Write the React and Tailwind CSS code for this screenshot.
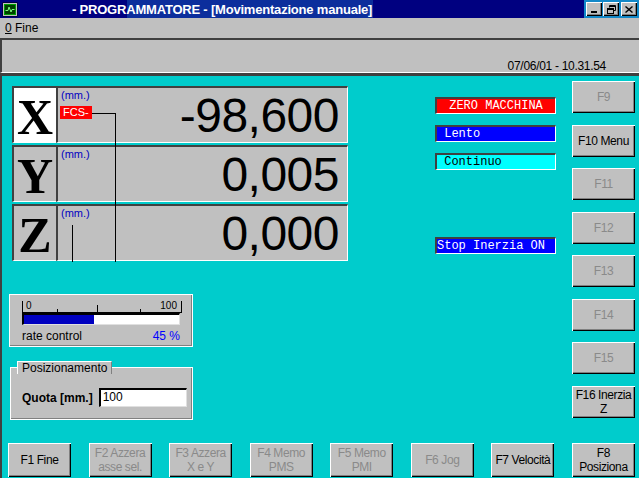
const RAISED =
  "bg-[#c0c0c0] shadow-[inset_1px_1px_0_#ffffff,inset_-1px_-1px_0_#000000,inset_-2px_-2px_0_#808080]";

const SIDE_KEYS = [
  { label: "F9", enabled: false },
  { label: "F10 Menu", enabled: true },
  { label: "F11", enabled: false },
  { label: "F12", enabled: false },
  { label: "F13", enabled: false },
  { label: "F14", enabled: false },
  { label: "F15", enabled: false },
  { label: ["F16 Inerzia", "Z"], enabled: true },
];

const BOTTOM_KEYS = [
  { label: ["F1 Fine"], enabled: true },
  { label: ["F2 Azzera", "asse sel."], enabled: false },
  { label: ["F3 Azzera", "X e Y"], enabled: false },
  { label: ["F4 Memo", "PMS"], enabled: false },
  { label: ["F5 Memo", "PMI"], enabled: false },
  { label: ["F6 Jog"], enabled: false },
  { label: ["F7 Velocità"], enabled: true },
  { label: ["F8", "Posiziona"], enabled: true },
];

const AXES = [
  { axis: "X", value: "-98,600", active: true },
  { axis: "Y", value: "0,005" },
  { axis: "Z", value: "0,000" },
];

function KeyButton({ label, enabled, className }) {
  const lines = Array.isArray(label) ? label : [label];
  return (
    <button
      className={`${RAISED} ${className} flex flex-col items-center justify-center text-[12px] leading-[14px] tracking-[-0.4px] ${
        enabled ? "text-black" : "text-[#8a8a8a]"
      }`}
    >
      {lines.map((l) => (
        <span key={l}>{l}</span>
      ))}
    </button>
  );
}

function AppIcon() {
  return (
    <svg width="16" height="15" viewBox="0 0 16 15">
      <rect x="0.5" y="0.5" width="15" height="14" fill="#000" />
      <rect x="1.5" y="1.5" width="13" height="12" fill="#00a000" stroke="#c0c0c0" />
      <rect x="3" y="3" width="10" height="9" fill="#004000" />
      <path d="M3.5 8.5 L6 8.5 L7 5 L9 10 L10 7.5 L12.5 7.5" stroke="#80ff80" fill="none" />
    </svg>
  );
}

function WinButton({ children }) {
  return (
    <div className="w-[16px] h-[14px] bg-[#c0c0c0] shadow-[inset_1px_1px_0_#ffffff,inset_-1px_-1px_0_#000000,inset_-2px_-2px_0_#808080] flex items-center justify-center">
      {children}
    </div>
  );
}

function AxisRow({ axis, value, active }) {
  return (
    <div className="flex h-[57px] mt-[2px] first:mt-0">
      <div
        className={`w-[44px] flex items-center justify-center border-t-2 border-l-2 border-t-[#404040] border-l-[#404040] border-b border-b-white ${
          active ? "bg-white" : "bg-[#c0c0c0]"
        }`}
      >
        <span className="font-['Liberation_Serif'] font-bold text-[50px] leading-none mt-[3px]">
          {axis}
        </span>
      </div>
      <div className="flex-1 relative bg-[#c0c0c0] border-t-2 border-l-2 border-t-[#404040] border-l-[#404040] border-b border-r border-b-white border-r-white flex items-center justify-end pr-[8px]">
        <div className="absolute left-[3px] top-[1px] text-[11px] leading-[12px] text-[#0000c0]">
          (mm.)
        </div>
        {active && (
          <div className="absolute left-[2px] top-[18px] w-[32px] h-[13px] bg-[#ff0000] text-white text-[11px] leading-[13px] pl-[3px]">
            FCS-
          </div>
        )}
        <span className="text-[48px] leading-none tracking-[-0.5px] mt-[2px]">{value}</span>
      </div>
    </div>
  );
}

function StatusBox({ text, className }) {
  return (
    <div
      className={`h-[17px] border-t-2 border-l-2 border-t-[#404040] border-l-[#404040] border-b border-r border-b-white border-r-white font-['Liberation_Mono'] text-[12px] leading-[14px] whitespace-pre ${className}`}
    >
      {text}
    </div>
  );
}

export default function App() {
  return (
    <div className="w-[639px] h-[478px] overflow-hidden flex flex-col bg-[#c0c0c0] font-['Liberation_Sans',Arial,sans-serif] text-black">
      {/* Title bar */}
      <div className="h-[18px] flex items-center bg-[#000080] relative">
        <div className="ml-[2px]">
          <AppIcon />
        </div>
        <div className="absolute left-[127px] top-0 w-[246px] h-[18px] bg-[#0c2e9c]" />
        <span className="relative ml-[54px] text-white font-bold text-[13px] tracking-[-0.2px] leading-none">
          - PROGRAMMATORE - [Movimentazione manuale]
        </span>
        <div className="ml-auto h-[18px] w-[55px] bg-[#1288c8] flex items-center justify-end gap-[1px] pr-[2px]">
          <WinButton>
            <div className="w-[6px] h-[2px] bg-black mt-[6px]" />
          </WinButton>
          <WinButton>
            <svg width="9" height="9" viewBox="0 0 9 9">
              <path d="M2.5 0.5h6v5h-2M2.5 0.5v2" stroke="#000" fill="none" />
              <path d="M2.5 1.5h6" stroke="#000" />
              <rect x="0.5" y="3.5" width="6" height="5" stroke="#000" fill="none" />
              <path d="M0.5 4.5h6" stroke="#000" />
            </svg>
          </WinButton>
          <div className="ml-[1px]">
            <WinButton>
              <svg width="8" height="7" viewBox="0 0 8 7">
                <path d="M0.5 0.5L7.5 6.5M7.5 0.5L0.5 6.5" stroke="#000" strokeWidth="1.4" />
              </svg>
            </WinButton>
          </div>
        </div>
      </div>

      {/* Menu bar */}
      <div className="h-[20px] flex items-center pl-[5px] text-[12px]">
        <span>
          <span className="underline">0</span> Fine
        </span>
      </div>

      {/* Status panel */}
      <div className="h-[35px] border-t-2 border-l-2 border-t-[#404040] border-l-[#404040] border-b border-b-white flex items-end justify-end pr-[33px] text-[12px] leading-[14px] tracking-[-0.3px]">
        <span className="mb-[-1px]">07/06/01 - 10.31.54</span>
      </div>

      {/* Main teal area */}
      <div className="flex-1 flex flex-col bg-[#00cccc] border-t-[3px] border-t-[#404040] border-l-2 border-l-[#404040]">
        <div className="flex items-start">
          {/* Left column */}
          <div className="w-[346px] mt-[10px]">
            <div className="relative ml-[10px]">
              {AXES.map((a) => (
                <AxisRow key={a.axis} {...a} />
              ))}
              <div className="absolute left-[80px] top-[27px] w-[24px] h-[1px] bg-black" />
              <div className="absolute left-[103px] top-[27px] w-[1px] h-[149px] bg-black" />
              <div className="absolute left-[60px] top-[139px] w-[1px] h-[37px] bg-black" />
            </div>

            {/* Rate control */}
            <div className="ml-[7px] mt-[33px] w-[184px] h-[53px] bg-[#c0c0c0] border border-white shadow-[inset_-1px_-1px_0_#808080] px-[12px] pt-[5px]">
              <svg width="160" height="13" viewBox="0 0 160 13" className="block">
                <path d="M0.5 1v12M159.5 1v12M0.5 12.5h159M35.5 9v3M75.5 5v7M118.5 9v3" stroke="#000" />
                <text x="4" y="9" fontSize="10" fontFamily="Liberation Sans">0</text>
                <text x="155" y="9" fontSize="10" fontFamily="Liberation Sans" textAnchor="end">100</text>
              </svg>
              <div className="h-[12px] bg-white border-t-2 border-l-2 border-t-black border-l-black border-r border-b border-r-[#e0e0e0] border-b-[#e0e0e0] flex">
                <div className="w-[45%] bg-[#0000c0]" />
              </div>
              <div className="flex justify-between text-[12px] leading-[14px] mt-[4px]">
                <span>rate control</span>
                <span className="text-[#0000ff]">45 %</span>
              </div>
            </div>

            {/* Posizionamento */}
            <div className="relative ml-[8px] mt-[20px] w-[183px] h-[53px] bg-[#c0c0c0] border border-white shadow-[inset_-1px_-1px_0_#808080] flex items-center pl-[11px]">
              <div className="absolute left-[6px] -top-[7px] h-[13px] px-[4px] bg-[#c0c0c0] border-t border-l border-t-white border-l-white border-r border-r-[#808080] text-[12px] leading-[12px]">
                Posizionamento
              </div>
              <span className="font-bold text-[12px] mt-[8px]">Quota [mm.]</span>
              <div className="ml-[6px] mt-[8px] w-[88px] h-[19px] bg-white border-t-2 border-l-2 border-t-black border-l-black border-b border-r border-b-[#e0e0e0] border-r-[#e0e0e0] text-[12px] leading-[15px] pl-[2px]">
                100
              </div>
            </div>
          </div>

          {/* Middle column */}
          <div className="ml-[87px] mt-[21px] w-[121px] flex flex-col">
            <StatusBox text="ZERO MACCHINA" className="bg-[#ff0000] text-white text-center" />
            <StatusBox text=" Lento" className="mt-[11px] bg-[#0000ff] text-white" />
            <StatusBox text=" Continuo" className="mt-[11px] bg-[#00ffff] text-black" />
            <StatusBox text="Stop Inerzia ON" className="mt-[67px] bg-[#0000ff] text-white" />
          </div>

          {/* Right column */}
          <div className="ml-[16px] mt-[5px] w-[63px] h-[337px] flex flex-col justify-between">
            {SIDE_KEYS.map((k, i) => (
              <KeyButton key={i} label={k.label} enabled={k.enabled} className="h-[32px] w-full" />
            ))}
          </div>
        </div>

        {/* Bottom row */}
        <div className="mt-auto mb-[1px] ml-[6px] w-[627px] flex justify-between">
          {BOTTOM_KEYS.map((k, i) => (
            <KeyButton key={i} label={k.label} enabled={k.enabled} className="h-[34px] w-[63px]" />
          ))}
        </div>
      </div>
    </div>
  );
}
